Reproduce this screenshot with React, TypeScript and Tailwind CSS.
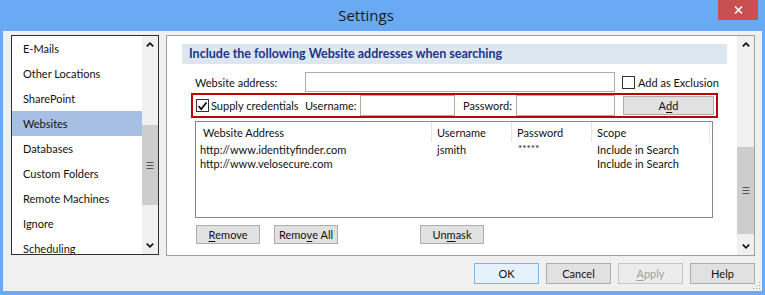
import React from "react";

function ChevUp() {
  return (
    <svg width="8" height="5" viewBox="0 0 8 5">
      <path d="M0.8 4.4 L4 1.2 L7.2 4.4" stroke="#111" strokeWidth="1.7" fill="none" />
    </svg>
  );
}
function ChevDown() {
  return (
    <svg width="8" height="5" viewBox="0 0 8 5">
      <path d="M0.8 0.6 L4 3.8 L7.2 0.6" stroke="#111" strokeWidth="1.7" fill="none" />
    </svg>
  );
}
function Grip() {
  return (
    <svg width="8" height="7" viewBox="0 0 8 7">
      <rect x="0.5" y="0" width="7" height="1" fill="#555" />
      <rect x="0.5" y="3" width="7" height="1" fill="#555" />
      <rect x="0.5" y="6" width="7" height="1" fill="#555" />
    </svg>
  );
}

function Scrollbar({ w, thumbTop, thumbH }: { w: string; thumbTop: number; thumbH: number }) {
  return (
    <div className={`${w} h-full bg-[#f0f0f0] flex flex-col shrink-0`}>
      <div className="h-[17px] flex items-center justify-center shrink-0">
        <ChevUp />
      </div>
      <div className="flex-1 relative">
        <div
          className="absolute left-0 right-0 bg-[#cdcdcd] flex items-center justify-center"
          style={{ top: thumbTop, height: thumbH }}
        >
          <Grip />
        </div>
      </div>
      <div className="h-[17px] flex items-center justify-center shrink-0">
        <ChevDown />
      </div>
    </div>
  );
}

function Btn({
  children,
  w,
  h,
  variant = "normal",
}: {
  children: React.ReactNode;
  w: string;
  h: string;
  variant?: "normal" | "default" | "disabled";
}) {
  const cls =
    variant === "default"
      ? "bg-[#e5f1fb] border-[#7eb4ea] text-[#111]"
      : variant === "disabled"
      ? "bg-[#ececec] border-[#c6c6c6] text-[#a0a0a0]"
      : "bg-[#e1e1e1] border-[#adadad] text-[#111]";
  return (
    <div className={`${w} ${h} border ${cls} flex items-center justify-center shrink-0`}>
      {children}
    </div>
  );
}

const U = ({ c }: { c: string }) => <span className="underline underline-offset-[2px]">{c}</span>;

const navItems = [
  "E-Mails",
  "Other Locations",
  "SharePoint",
  "Websites",
  "Databases",
  "Custom Folders",
  "Remote Machines",
  "Ignore",
  "Scheduling",
];

export default function App() {
  return (
    <div className="w-[765px] h-[295px] bg-[#6aa9f4] flex flex-col overflow-hidden font-['Lato','Open_Sans',sans-serif] text-[11px] leading-none text-[#111]">
      {/* Title bar */}
      <div className="h-[31px] flex items-start shrink-0">
        <div className="flex-1 h-[31px] flex items-center justify-center pl-[14px] text-[15px] text-[#1a1a1a] font-['Open_Sans',sans-serif]">
          Settings
        </div>
        <div className="w-[40px] h-[20px] mt-[0px] mr-[7px] bg-[#c75050] flex items-center justify-center">
          <svg width="9" height="8" viewBox="0 0 9 8">
            <path d="M1 0.5 L8 7.5 M8 0.5 L1 7.5" stroke="#fff" strokeWidth="1.5" />
          </svg>
        </div>
      </div>

      {/* Client area */}
      <div className="flex-1 mx-[3px] mb-[4px] bg-[#f0f0f0] flex flex-col relative">
        <div className="flex pt-[4px] pl-[8px] gap-[7px]">
          {/* Left list */}
          <div className="w-[148px] h-[220px] border border-[#2f2f2f] bg-white flex shrink-0">
            <div className="flex-1 overflow-hidden text-[11px]">
              {navItems.map((it) => (
                <div
                  key={it}
                  className={`h-[25px] flex items-center pl-[11px] ${
                    it === "Websites" ? "bg-[#a6bfe2]" : ""
                  }`}
                >
                  {it}
                </div>
              ))}
            </div>
            <Scrollbar w="w-[16px]" thumbTop={72} thumbH={80} />
          </div>

          {/* Right panel */}
          <div className="w-[589px] h-[221px] border border-[#a0a0a0] bg-white flex shrink-0">
            <div className="flex-1 flex flex-col pl-[15px] pt-[8px] overflow-hidden">
              <div className="w-[545px] h-[20px] bg-[#dde7ef] flex items-center pl-[7px] font-bold text-[12.5px] text-[#203487] shrink-0">
                Include the following Website addresses when searching
              </div>

              {/* Website address row */}
              <div className="mt-[8px] h-[20px] flex items-center shrink-0">
                <div className="w-[110px] ml-[13px]">Website address:</div>
                <div className="w-[310px] h-[20px] border border-[#abadb3] bg-white" />
                <div className="ml-[7px] w-[13px] h-[13px] border border-[#333] bg-white" />
                <div className="ml-[3px] whitespace-nowrap">Add as Exclusion</div>
              </div>

              {/* Credentials row */}
              <div className="mt-[1px] ml-[9px] w-[527px] h-[25px] border-2 border-[#c00000] flex items-center shrink-0">
                <div className="w-[112px] flex items-center pl-[3px]">
                  <div className="w-[13px] h-[13px] border border-[#333] bg-white flex items-center justify-center shrink-0">
                    <svg width="11" height="10" viewBox="0 0 11 10">
                      <path d="M1.5 5 L4.2 8 L9.5 1.5" stroke="#111" strokeWidth="1.8" fill="none" />
                    </svg>
                  </div>
                  <div className="ml-[2px] whitespace-nowrap">Supply credentials</div>
                </div>
                <div className="w-[55px] whitespace-nowrap">Username:</div>
                <div className="w-[95px] h-[21px] border border-[#abadb3] bg-white shrink-0" />
                <div className="ml-[8px] w-[53px] whitespace-nowrap">Password:</div>
                <div className="w-[99px] h-[21px] border border-[#abadb3] bg-white shrink-0" />
                <div className="ml-[8px]">
                  <Btn w="w-[91px]" h="h-[19px]">
                    A<U c="d" />d
                  </Btn>
                </div>
              </div>

              {/* List view */}
              <div className="mt-[3px] ml-[13px] w-[518px] h-[97px] border border-[#828790] bg-white flex flex-col shrink-0">
                <div className="h-[20px] flex shrink-0">
                  <div className="w-[236px] pl-[7px] flex items-center border-r border-[#e5e5e5]">Website Address</div>
                  <div className="w-[80px] pl-[5px] flex items-center border-r border-[#e5e5e5]">Username</div>
                  <div className="w-[80px] pl-[5px] flex items-center border-r border-[#e5e5e5]">Password</div>
                  <div className="w-[118px] pl-[5px] flex items-center border-r border-[#e5e5e5]">Scope</div>
                </div>
                <div className="h-[14px] flex items-center shrink-0">
                  <div className="w-[236px] pl-[4px]">http://www.identityfinder.com</div>
                  <div className="w-[80px] pl-[5px]">jsmith</div>
                  <div className="w-[80px] pl-[6px] text-[10px] self-start pt-[1px]">*****</div>
                  <div className="w-[118px] pl-[5px]">Include in Search</div>
                </div>
                <div className="h-[14px] flex items-center shrink-0">
                  <div className="w-[236px] pl-[4px]">http://www.velosecure.com</div>
                  <div className="w-[80px] pl-[5px]"></div>
                  <div className="w-[80px] pl-[6px]"></div>
                  <div className="w-[118px] pl-[5px]">Include in Search</div>
                </div>
              </div>

              {/* Buttons under list */}
              <div className="mt-[7px] ml-[14px] flex shrink-0">
                <Btn w="w-[64px]" h="h-[19px]">
                  <U c="R" />emove
                </Btn>
                <div className="ml-[14px]">
                  <Btn w="w-[64px]" h="h-[19px]">
                    Remo<U c="v" />e All
                  </Btn>
                </div>
                <div className="ml-[82px]">
                  <Btn w="w-[64px]" h="h-[19px]">
                    Un<U c="m" />ask
                  </Btn>
                </div>
              </div>
            </div>
            <Scrollbar w="w-[17px]" thumbTop={94} thumbH={87} />
          </div>
        </div>

        {/* Dialog buttons */}
        <div className="flex justify-end gap-[7px] pr-[7px] mt-auto mb-[7px]">
          <Btn w="w-[65px]" h="h-[21px]" variant="default">OK</Btn>
          <Btn w="w-[65px]" h="h-[21px]">Cancel</Btn>
          <Btn w="w-[65px]" h="h-[21px]" variant="disabled">
            <U c="A" />pply
          </Btn>
          <Btn w="w-[65px]" h="h-[21px]">Help</Btn>
        </div>

        {/* Resize grip */}
        <svg className="absolute right-[1px] bottom-[1px]" width="10" height="10" viewBox="0 0 10 10">
          <rect x="8" y="2" width="1" height="1" fill="#a0a0a0" />
          <rect x="5" y="5" width="1" height="1" fill="#a0a0a0" />
          <rect x="8" y="5" width="1" height="1" fill="#a0a0a0" />
          <rect x="2" y="8" width="1" height="1" fill="#a0a0a0" />
          <rect x="5" y="8" width="1" height="1" fill="#a0a0a0" />
          <rect x="8" y="8" width="1" height="1" fill="#a0a0a0" />
        </svg>
      </div>
    </div>
  );
}
